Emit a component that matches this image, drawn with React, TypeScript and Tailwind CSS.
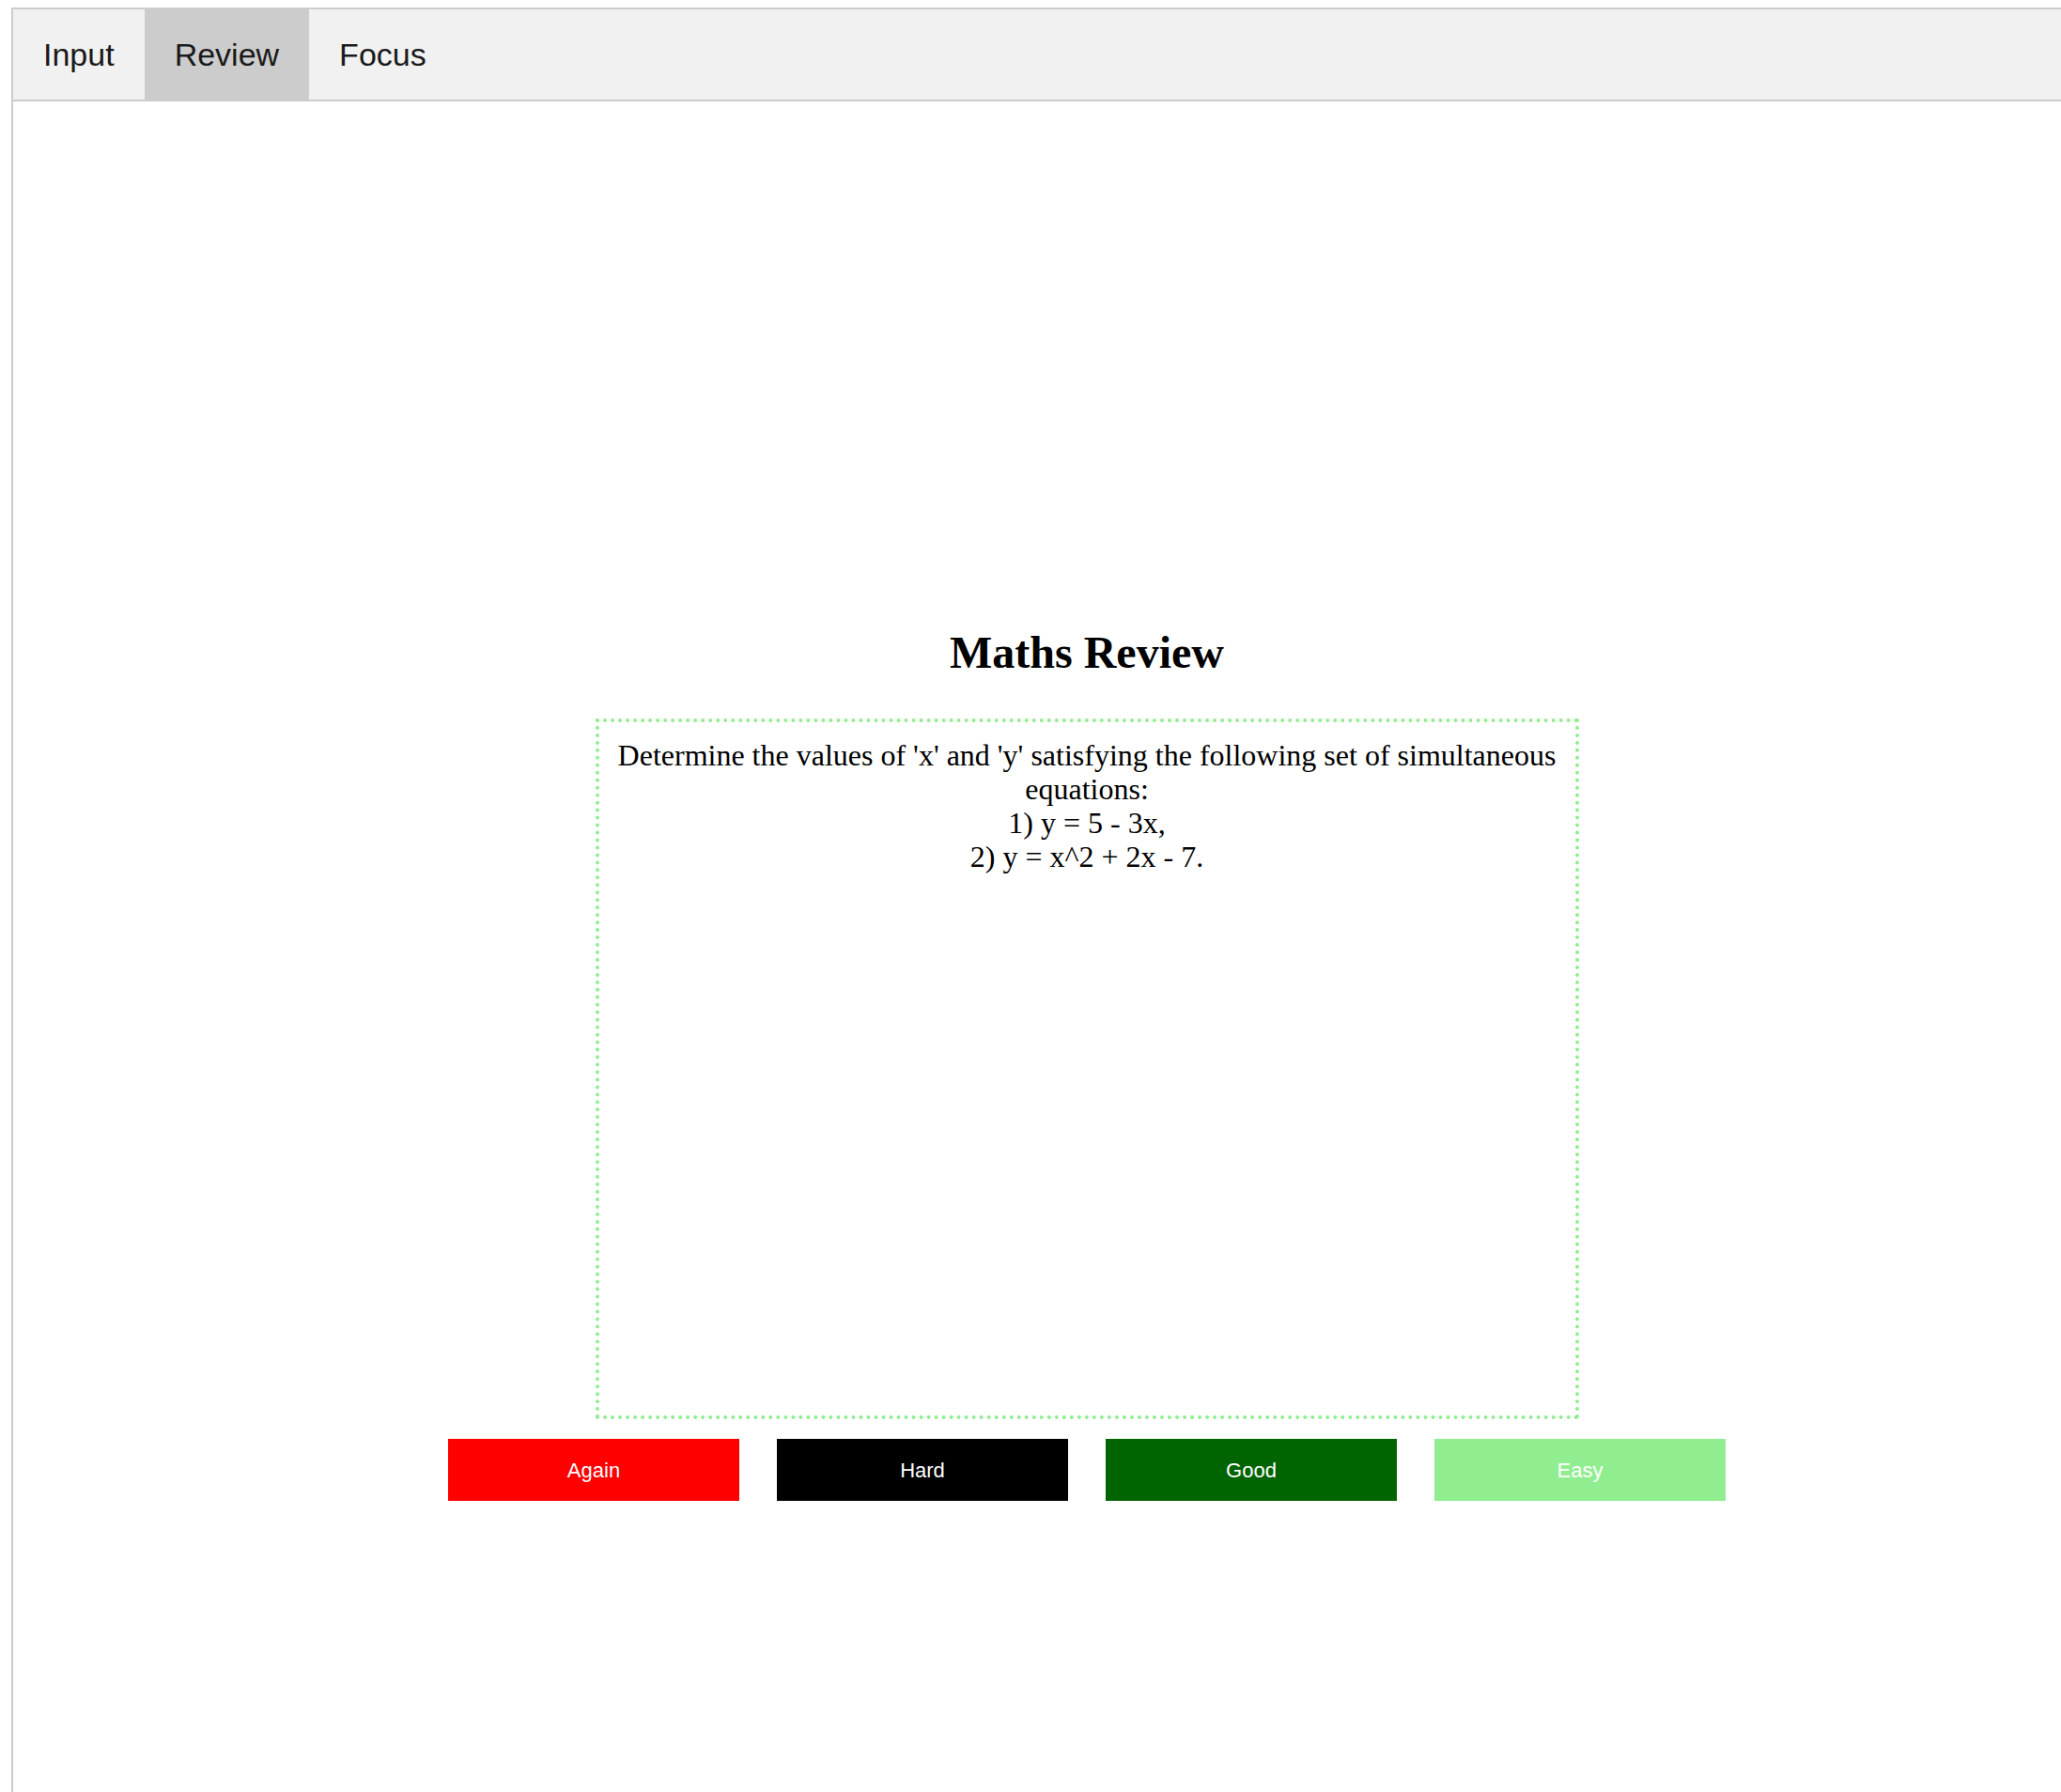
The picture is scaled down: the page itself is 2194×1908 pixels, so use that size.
import React, { useState } from "react";

const tabs = ["Input", "Review", "Focus"];

const ratings = [
  { label: "Again", cls: "bg-[#ff0000]" },
  { label: "Hard", cls: "bg-black" },
  { label: "Good", cls: "bg-[#006400]" },
  { label: "Easy", cls: "bg-[#90ee90]" },
];

export default function App() {
  const [active, setActive] = useState("Review");

  return (
    <div className="w-full min-h-screen overflow-hidden bg-white">
      <div className="ml-[12px] mt-[8px] w-[2290px]">
        {/* tab bar */}
        <div className="flex h-[100px] border-2 border-[#cccccc] bg-[#f1f1f1]">
          {tabs.map((t) => (
            <button
              key={t}
              onClick={() => setActive(t)}
              className={`px-[32px] h-full text-[34px] text-[#1a1a1a] font-['Liberation_Sans',Arial,sans-serif] ${
                active === t ? "bg-[#cccccc]" : "bg-[#f1f1f1]"
              }`}
            >
              {t}
            </button>
          ))}
        </div>

        {/* review panel */}
        <div className="h-[1820px] border-2 border-t-0 border-[#cccccc] px-[24px] pt-[560px] flex flex-col items-center font-['Liberation_Serif','Times_New_Roman',serif] text-black">
          <h1 className="text-[48px] font-bold leading-[53px]">Maths Review</h1>
          <div className="mt-[44px] w-[1047px] h-[746px] border-[4px] border-dotted border-[#90ee90] px-[14px] pt-[17px] text-center text-[32px] leading-[36px]">
            Determine the values of 'x' and 'y' satisfying the following set of simultaneous equations:
            <br />
            1) y = 5 - 3x,
            <br />
            2) y = x^2 + 2x - 7.
          </div>
          <div className="mt-[21px] flex gap-[40px]">
            {ratings.map((r) => (
              <button
                key={r.label}
                className={`w-[310px] h-[66px] ${r.cls} text-white text-[22px] font-['Liberation_Sans',Arial,sans-serif]`}
              >
                {r.label}
              </button>
            ))}
          </div>
        </div>
      </div>
    </div>
  );
}
